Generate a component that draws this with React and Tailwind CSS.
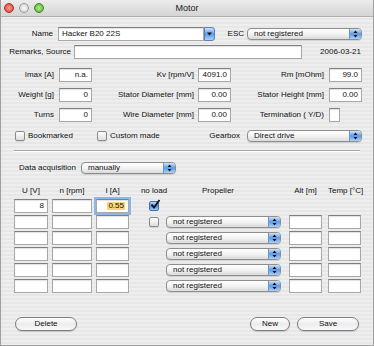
import React from 'react';

const font = "font-['Liberation_Sans',Arial,sans-serif]";

const Arrows = () => (
    <svg width="5" height="8" viewBox="0 0 5 8">
        <path d="M2.5 0.5 L4.5 3 L0.5 3 Z" fill="#111" />
        <path d="M2.5 7.5 L4.5 5 L0.5 5 Z" fill="#111" />
    </svg>
);

const Field = ({ className = '', children, focus }) => (
    <div
        className={`h-[14px] shrink-0 bg-white border border-[#a8a8a8] border-t-[#808080] shadow-[inset_0_1px_1px_rgba(0,0,0,0.12)] flex items-center justify-end px-[3px] text-[8px] leading-none text-[#111] ${focus ? 'outline-2 outline-[#8fb6e6]' : ''} ${className}`}
    >
        {children}
    </div>
);

const Popup = ({ className = '', label }) => (
    <div className={`h-[12px] shrink-0 flex rounded-[4px] border border-[#8e8e8e] bg-linear-to-b from-white via-[#f3f3f3] to-[#dadada] overflow-hidden shadow-[0_1px_1px_rgba(0,0,0,0.12)] ${className}`}>
        <div className="flex-1 flex items-center pl-[6px] text-[8px] leading-none text-[#111]">{label}</div>
        <div className="w-[12px] flex items-center justify-center border-l border-[#6f93c4] bg-linear-to-b from-[#cfe4fa] via-[#5b9ae6] to-[#acd3f8]">
            <Arrows />
        </div>
    </div>
);

const Checkbox = ({ checked }) => (
    checked ? (
        <div className="w-[10px] h-[10px] shrink-0 rounded-[2px] border border-[#4a6fa5] bg-linear-to-b from-[#c2dcf8] via-[#4f8fe0] to-[#9fcaf5] relative">
            <svg className="absolute -top-[3px] left-[0px]" width="11" height="11" viewBox="0 0 11 11">
                <path d="M1.5 5.5 L4 8.5 L9.5 1" stroke="#111" strokeWidth="1.8" fill="none" />
            </svg>
        </div>
    ) : (
        <div className="w-[10px] h-[10px] shrink-0 rounded-[2px] border border-[#8a8a8a] bg-linear-to-b from-white to-[#dedede] shadow-[0_1px_1px_rgba(0,0,0,0.1)]" />
    )
);

const Pill = ({ className = '', label }) => (
    <div className={`h-[14px] rounded-full border border-[#7c7c7c] bg-linear-to-b from-white via-[#ececec] to-[#fafafa] shadow-[0_1px_1px_rgba(0,0,0,0.15)] flex items-center justify-center text-[8px] leading-none text-[#111] ${className}`}>
        {label}
    </div>
);

const Light = ({ className }) => (
    <div className={`w-[10px] h-[10px] rounded-full border ${className}`} />
);

const TableRow = ({ first, check, u, i }) => (
    <div className="flex items-center h-[14px]">
        <Field className="ml-[13px] w-[34px]">{u}</Field>
        <Field className="ml-[4px] w-[40px]" />
        <Field className="ml-[4px] w-[33px]" focus={!!i}>
            {i && <span className="bg-[#fdd47c] px-[1px]">{i}</span>}
        </Field>
        <div className="ml-[20px] w-[10px] flex">
            {check !== undefined && <Checkbox checked={check} />}
        </div>
        {!first && (
            <>
                <Popup className="ml-[7px] w-[115px]" label="not registered" />
                <Field className="ml-[8px] w-[33px]" />
                <Field className="ml-[6px] w-[33px]" />
            </>
        )}
    </div>
);

export default function App() {
    const params = [
        ['Imax [A]', 'n.a.', 'Kv [rpm/V]', '4091.0', 'Rm [mOhm]', '99.0'],
        ['Weight [g]', '0', 'Stator Diameter [mm]', '0.00', 'Stator Height [mm]', '0.00'],
        ['Turns', '0', 'Wire Diameter [mm]', '0.00', 'Termination ( Y/D)', null],
    ];

    return (
        <div className={`w-[374px] h-[346px] overflow-hidden flex flex-col whitespace-nowrap text-[8px] leading-none text-[#111] bg-[repeating-linear-gradient(to_bottom,#eeeeee_0px,#eeeeee_2px,#e7e7e7_2px,#e7e7e7_4px)] border-x border-b border-[#a0a0a0] ${font}`}>
            {/* title bar */}
            <div className="h-[17px] shrink-0 grid grid-cols-[1fr_auto_1fr] items-center bg-linear-to-b from-[#ececec] to-[#d4d4d4] border-b border-[#b0b0b0] rounded-t-[5px]">
                <div className="flex items-center gap-[5px] pl-[3px]">
                    <Light className="border-[#a2302a] bg-radial from-[#ff9a8f] to-[#d8332a]" />
                    <Light className="border-[#9a9a9a] bg-radial from-white to-[#c8c8c8]" />
                    <Light className="border-[#3f8a22] bg-radial from-[#b6f08c] to-[#4aa327]" />
                </div>
                <div className="text-[9px] text-[#222]">Motor</div>
                <div />
            </div>

            {/* name */}
            <div className="mt-[10px] h-[14px] flex items-center">
                <div className="w-[52px] text-right">Name</div>
                <div className="ml-[5px] w-[157px] h-[14px] flex">
                    <Field className="flex-1 justify-start! px-[2px]">Hacker B20 22S</Field>
                    <div className="w-[11px] h-[14px] flex items-center justify-center rounded-r-[3px] border border-[#5b7fb4] bg-linear-to-b from-[#cfe4fa] via-[#5b9ae6] to-[#acd3f8]">
                        <svg width="5" height="4" viewBox="0 0 5 4"><path d="M0 0.5 L5 0.5 L2.5 3.5 Z" fill="#111" /></svg>
                    </div>
                </div>
                <div className="w-[29px] text-right">ESC</div>
                <Popup className="ml-[3px] w-[115px]" label="not registered" />
            </div>

            {/* remarks */}
            <div className="mt-[4px] h-[14px] flex items-center">
                <div className="w-[70px] text-right">Remarks, Source</div>
                <Field className="ml-[3px] w-[228px]" />
                <div className="w-[59px] text-right">2006-03-21</div>
            </div>

            {/* parameters */}
            <div className="mt-[9px] flex flex-col gap-[6px]">
                {params.map((r) => (
                    <div key={r[0]} className="h-[14px] flex items-center">
                        <div className="w-[53px] text-right">{r[0]}</div>
                        <Field className="ml-[5px] w-[33px]">{r[1]}</Field>
                        <div className="w-[102px] text-right">{r[2]}</div>
                        <Field className="ml-[4px] w-[33px]">{r[3]}</Field>
                        <div className="w-[93px] text-right">{r[4]}</div>
                        {r[5] === null
                            ? <Field className="ml-[5px] w-[11px]" />
                            : <Field className="ml-[5px] w-[33px]">{r[5]}</Field>}
                    </div>
                ))}
            </div>

            {/* flags + gearbox */}
            <div className="mt-[8px] h-[12px] flex items-center">
                <div className="ml-[14px] w-[82px] flex items-center gap-[3px]">
                    <Checkbox /> <span>Bookmarked</span>
                </div>
                <div className="w-[96px] flex items-center gap-[3px]">
                    <Checkbox /> <span>Custom made</span>
                </div>
                <div className="w-[47px] text-right">Gearbox</div>
                <Popup className="ml-[7px] w-[115px]" label="Direct drive" />
            </div>

            <div className="mt-[8px] mx-[13px] h-[2px] border-t border-[#a4a4a4] border-b border-b-white" />

            {/* data acquisition */}
            <div className="mt-[10px] h-[12px] flex items-center">
                <div className="w-[75px] pl-[18px]">Data acquisition</div>
                <Popup className="ml-[5px] w-[95px]" label="manually" />
            </div>

            {/* table */}
            <div className="mt-[11px] h-[12px] flex items-center text-center">
                <div className="ml-[13px] w-[34px]">U [V]</div>
                <div className="ml-[4px] w-[40px]">n [rpm]</div>
                <div className="ml-[4px] w-[33px]">I [A]</div>
                <div className="w-[50px]">no load</div>
                <div className="w-[78px]">Propeller</div>
                <div className="ml-[32px] w-[33px]">Alt [m]</div>
                <div className="ml-[6px] w-[33px]">Temp [°C]</div>
            </div>
            <div className="mt-[2px] flex flex-col gap-[2px]">
                <TableRow first check={true} u="8" i="0.55" />
                <TableRow check={false} />
                <TableRow />
                <TableRow />
                <TableRow />
                <TableRow />
            </div>

            {/* buttons */}
            <div className="mt-[24px] px-[14px] flex justify-between">
                <Pill className="w-[62px]" label="Delete" />
                <div className="flex gap-[7px]">
                    <Pill className="w-[40px]" label="New" />
                    <Pill className="w-[62px]" label="Save" />
                </div>
            </div>
        </div>
    );
}
